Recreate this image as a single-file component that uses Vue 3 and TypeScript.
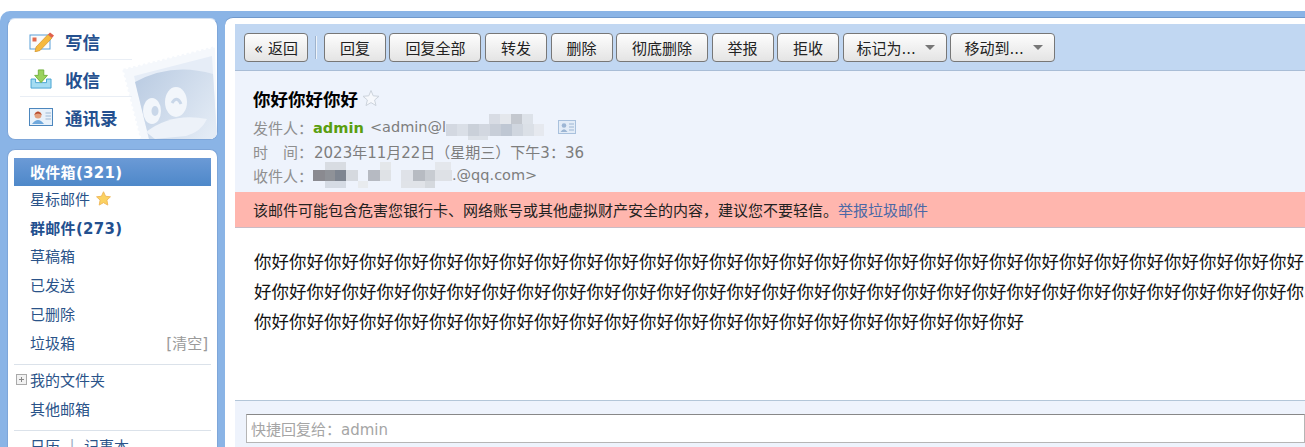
<template>
  <div class="page">
    <div class="top-gap"></div>
    <div class="frame">
      <aside class="side">
        <div class="quick">
          <svg class="penguin" viewBox="0 0 100 95" aria-hidden="true">
            <defs>
              <linearGradient id="head" x1="0" y1="0.2" x2="1" y2="0.8">
                <stop offset="0" stop-color="#bccde3" />
                <stop offset="1" stop-color="#e3ebf5" />
              </linearGradient>
            </defs>
            <path d="M5 25 L98 2 L100 95 H23 Z" fill="#f5f8fc" />
            <path d="M5 25 L98 2 M5 25 L23 95" stroke="#fff" stroke-width="3" stroke-linecap="round" stroke-dasharray="0 5" fill="none" />
            <path d="M17 32 L95 12 L100 95 H32 Z" fill="#e6edf7" />
            <path d="M18 38 Q55 18 96 30 L100 95 H32 Z" fill="url(#head)" />
            <ellipse cx="35" cy="67" rx="9" ry="13" fill="#f2f6fb" />
            <ellipse cx="59" cy="58" rx="11" ry="15" fill="#f2f6fb" />
            <ellipse cx="38" cy="67" rx="3.5" ry="5" fill="#c9d7e9" />
            <path d="M55 59 q5 -8 9 1" stroke="#c9d7e9" stroke-width="3" fill="none" />
            <path d="M29 88 Q55 68 90 75 Q84 88 69 92 L38 95 Z" fill="#edf2f9" />
          </svg>
          <a class="quick-item">
            <svg class="qi" viewBox="0 0 25 20" aria-hidden="true">
              <rect x="1" y="3" width="20" height="14" fill="#fbfbfb" stroke="#5a9fd8" />
              <rect x="3.5" y="5.5" width="4" height="4" fill="#e2694d" />
              <path d="M7 15 L19 2.5 L23 6 L11 18.5 L6 20 Z" fill="#f6b93f" stroke="#c98a20" stroke-width=".6" />
              <path d="M19 2.5 L21 .5 L25 3.5 L23 6 Z" fill="#e0604c" />
            </svg>
            <span>写信</span>
          </a>
          <a class="quick-item">
            <svg class="qi" viewBox="0 0 25 22" aria-hidden="true">
              <path d="M1 11 H6 V15 H18 V11 H23 V21 H1 Z" fill="#a5dcf2" stroke="#3f9fd0" />
              <path d="M9 1 H15 V7 H19 L12 15 L5 7 H9 Z" fill="#9ad25e" stroke="#6fb03a" />
            </svg>
            <span>收信</span>
          </a>
          <a class="quick-item">
            <svg class="qi" viewBox="0 0 25 20" aria-hidden="true">
              <rect x=".5" y="1.5" width="23" height="17" fill="#e8f1fa" stroke="#4c86bd" />
              <circle cx="9" cy="8" r="3.5" fill="#e3a07d" />
              <path d="M5 8 Q9 1 13 8 Q9 5 5 8Z" fill="#b5492e" />
              <path d="M3 17 Q9 9 15 17 Z" fill="#6fa8dc" />
              <path d="M16.5 6 H22 M16.5 9 H22 M16.5 12 H22" stroke="#9db8d3" />
            </svg>
            <span>通讯录</span>
          </a>
        </div>

        <div class="folders">
          <div class="folder active"><b>收件箱(321)</b></div>
          <div class="folder">
            星标邮件
            <svg class="star" viewBox="0 0 16 16" aria-hidden="true">
              <path d="M8 .8 10.2 5.6 15.4 6.2 11.6 9.7 12.6 15 8 12.4 3.4 15 4.4 9.7.6 6.2 5.8 5.6Z" fill="#fbd261" stroke="#efb85a" />
            </svg>
          </div>
          <div class="folder"><b>群邮件(273)</b></div>
          <div class="folder">草稿箱</div>
          <div class="folder">已发送</div>
          <div class="folder">已删除</div>
          <div class="folder spread">垃圾箱<span class="clear">[清空]</span></div>
          <div class="rule"></div>
          <div class="folder">
            <span class="plus"></span>我的文件夹
          </div>
          <div class="folder">其他邮箱</div>
          <div class="rule"></div>
          <div class="folder">日历<span class="pipe">|</span>记事本</div>
        </div>
      </aside>

      <main class="main">
        <div class="toolbar">
          <button class="btn back">« 返回</button>
          <span class="sep"></span>
          <button v-for="b in buttons" :key="b" class="btn">{{ b }}</button>
          <button v-for="m in menus" :key="m" class="btn menu">{{ m }}<i class="arrow"></i></button>
        </div>

        <div class="head">
          <div class="subject">
            你好你好你好
            <svg class="sub-star" viewBox="0 0 18 18" aria-hidden="true">
              <path d="M9 1.5 11.2 6.8 17 7.3 12.6 11 14 16.6 9 13.6 4 16.6 5.4 11 1 7.3 6.8 6.8Z" fill="#f6f8fc" stroke="#ccd3dc" />
            </svg>
          </div>
          <div class="meta">
            <span class="lbl">发件人：</span><b class="sender">admin</b>
            <span class="addr small gap">&lt;admin@l</span>
            <svg class="mosaic m1" viewBox="0 0 100 26" aria-hidden="true">
              <rect v-for="(r, i) in mosaicFrom" :key="i" :x="r[0]" :y="r[1]" :width="r[2]" :height="r[3]" :fill="r[4]" />
            </svg>
            <svg class="card" viewBox="0 0 18 14" aria-hidden="true">
              <rect x=".5" y=".5" width="17" height="13" fill="#e3ecf7" stroke="#a9c1dd" />
              <circle cx="6" cy="5.5" r="2.3" fill="#9db6d4" />
              <path d="M2.5 12 Q6 6.5 9.5 12Z" fill="#9db6d4" />
              <path d="M11 4 H16 M11 7 H16 M11 10 H16" stroke="#9db6d4" />
            </svg>
          </div>
          <div class="meta">
            <span class="lbl">时　间：</span><span class="addr time">2023年11月22日（星期三）下午3：36</span>
          </div>
          <div class="meta">
            <span class="lbl">收件人：</span>
            <svg class="mosaic m2" viewBox="0 0 139 26" aria-hidden="true">
              <rect v-for="(r, i) in mosaicTo" :key="i" :x="r[0]" :y="r[1]" :width="r[2]" :height="r[3]" :fill="r[4]" />
            </svg>
            <span class="addr small">.@qq.com&gt;</span>
          </div>
        </div>

        <div class="warn">
          该邮件可能包含危害您银行卡、网络账号或其他虚拟财产安全的内容，建议您不要轻信。<a>举报垃圾邮件</a>
        </div>

        <div class="body">
          <div v-for="(line, i) in lines" :key="i" class="line">{{ line }}</div>
        </div>

        <div class="reply">
          <div class="reply-box">快捷回复给：admin</div>
        </div>
      </main>
    </div>
  </div>
</template>

<script setup lang="ts">
type Block = [number, number, number, number, string]

const buttons: string[] = ['回复', '回复全部', '转发', '删除', '彻底删除', '举报', '拒收']
const menus: string[] = ['标记为...', '移动到...']

const lines: string[] = [
  '你好'.repeat(30),
  '好你'.repeat(30),
  '你好'.repeat(22),
]

// redacted address, drawn as the mosaic blocks of the screenshot
const mosaicFrom: Block[] = [
  [43, 0, 11, 10, '#d8dce4'],
  [54, 0, 11, 10, '#e4e7ec'],
  [65, 0, 11, 10, '#c4c8cf'],
  [76, 0, 11, 10, '#dde2e9'],
  [0, 10, 11, 12, '#d3d8e1'],
  [11, 10, 11, 12, '#dadfe7'],
  [22, 10, 11, 12, '#cad0d9'],
  [33, 10, 11, 12, '#d2d7e0'],
  [44, 10, 11, 12, '#c8ced8'],
  [55, 10, 11, 12, '#bfc7d3'],
  [66, 10, 11, 12, '#d0d6df'],
  [77, 10, 11, 12, '#dbe0e7'],
  [88, 10, 10, 12, '#e6e9ef'],
  [22, 22, 20, 4, '#dce1e8'],
]

const mosaicTo: Block[] = [
  [12, 0, 21, 8, '#d8dce2'],
  [67, 0, 11, 8, '#e4e7ea'],
  [122, 0, 16, 8, '#e4e7ec'],
  [0, 8, 12, 11, '#8a8a90'],
  [12, 8, 10, 11, '#8f9298'],
  [22, 8, 11, 11, '#7e8590'],
  [33, 8, 12, 11, '#d5d9df'],
  [55, 8, 12, 11, '#b6bac2'],
  [67, 8, 11, 11, '#dfe2e6'],
  [88, 8, 12, 11, '#dfe2e8'],
  [100, 8, 12, 11, '#b7bbc2'],
  [112, 8, 10, 11, '#c8ccd2'],
  [122, 8, 17, 11, '#dee1e6'],
  [12, 19, 21, 7, '#d5dbe4'],
  [45, 19, 10, 7, '#e8ebee'],
  [88, 19, 24, 7, '#e0e3e8'],
  [112, 19, 10, 7, '#d5d9de'],
]
</script>

<style>
html,
body {
  margin: 0;
  background: #fff;
  overflow: hidden;
}
</style>

<style scoped>
.page {
  width: 1305px;
  height: 447px;
  overflow: hidden;
  font-family: "DejaVu Sans", "Noto Sans CJK SC", sans-serif;
}

.top-gap {
  height: 11px;
}

.frame {
  display: flex;
  height: 436px;
  box-sizing: border-box;
  padding: 6px 0 0 7px;
  gap: 7px;
  background: #8ab4e6;
  border-top-left-radius: 10px;
}

.side {
  width: 211px;
  flex: none;
  margin-top: 1px;
  display: flex;
  flex-direction: column;
  gap: 9px;
}

.quick {
  position: relative;
  height: 122px;
  flex: none;
  box-sizing: border-box;
  padding: 3px 12px 0;
  background: #fff;
  border-radius: 8px;
  border: 1px solid #7ea6d9;
  border-top-color: #d5e2f3;
  overflow: hidden;
}

.penguin {
  position: absolute;
  right: 0;
  bottom: 0;
  width: 100px;
  height: 95px;
}

.quick-item {
  position: relative;
  display: flex;
  align-items: center;
  box-sizing: border-box;
  width: 112px;
  height: 37.5px;
  padding-top: 3px;
  color: #24508f;
  font-size: 17.5px;
  font-weight: 700;
  border-bottom: 1px solid #e9eef5;
}

.quick-item:last-of-type {
  border-bottom: 0;
}

.qi {
  width: 25px;
  height: 20px;
  margin: 0 11px 0 9px;
  flex: none;
}

.folders {
  flex: 1;
  min-height: 0;
  box-sizing: border-box;
  padding: 8px 6px 0;
  background: #fff;
  border: 1px solid #7ea6d9;
  border-bottom: 0;
  border-radius: 8px 8px 0 0;
  overflow: hidden;
}

.folder {
  display: flex;
  align-items: center;
  box-sizing: border-box;
  height: 28.8px;
  padding: 0 0 4px 16px;
  color: #2a5389;
  font-size: 15px;
  white-space: nowrap;
}

.folder b {
  color: #23508f;
  letter-spacing: .3px;
}

.folder.active {
  height: 28px;
  padding-bottom: 2px;
  background: linear-gradient(#6b9ad6, #4e88c9);
}

.folder.active b {
  color: #fff;
}

.spread {
  justify-content: space-between;
  padding-right: 3px;
}

.clear {
  color: #9a9a9a;
}

.star {
  width: 15px;
  height: 15px;
  margin-left: 6px;
}

.rule {
  height: 1px;
  margin: 5.5px 0 2px;
  background: #dbe2ea;
}

.plus {
  width: 9px;
  height: 9px;
  margin: 0 3px 0 -14px;
  border: 1px solid #aaa;
  flex: none;
  background:
    linear-gradient(#888, #888) center / 5px 1px no-repeat,
    linear-gradient(#888, #888) center / 1px 5px no-repeat,
    #f2f2f2;
}

.pipe {
  margin: 0 9.5px;
  color: #9fb0c4;
}

.main {
  flex: 1;
  min-width: 0;
  box-sizing: border-box;
  display: flex;
  flex-direction: column;
  padding: 6px 0 0 10px;
  background: #fff;
  border-top: 1px solid #7099cc;
  border-top-left-radius: 8px;
}

.toolbar {
  display: flex;
  align-items: center;
  gap: 3.5px;
  height: 47px;
  flex: none;
  box-sizing: border-box;
  padding: 0 9px;
  background: #c1d7f2;
  border-bottom: 1px solid #a9bdd6;
}

.btn {
  height: 29px;
  padding: 0 15px;
  flex: none;
  font: 15px "DejaVu Sans", "Noto Sans CJK SC", sans-serif;
  color: #222;
  background: linear-gradient(#fdfdfd, #e4e4e4);
  border: 1px solid #777;
  border-radius: 4px;
}

.back {
  padding: 0 9px;
}

.sep {
  width: 1px;
  height: 23px;
  margin: 0 3.5px;
  background: #eef3f9;
  border-left: 1px solid #9fb3cc;
}

.menu {
  display: flex;
  align-items: center;
  padding: 0 11px 0 13px;
}

.arrow {
  margin-left: 9px;
  border-style: solid;
  border-width: 5px 5px 0;
  border-color: #777 transparent transparent;
}

.head {
  height: 121px;
  flex: none;
  box-sizing: border-box;
  padding: 14px 18px 0;
  background: #eef3fc;
}

.subject {
  display: flex;
  align-items: center;
  height: 26px;
  margin-bottom: 4px;
  font-size: 17.5px;
  font-weight: 700;
  color: #000;
}

.sub-star {
  width: 18px;
  height: 18px;
  margin-left: 4px;
}

.meta {
  display: flex;
  align-items: center;
  height: 24px;
  font-size: 15px;
  color: #888;
  white-space: nowrap;
}

.lbl {
  color: #8f8f8f;
  width: 60px;
  flex: none;
}

.sender {
  color: #5a9e0f;
  font-size: 14.6px;
}

.addr {
  color: #7d7d7d;
}

.small {
  font-size: 14.5px;
}

.time {
  margin-left: 1px;
}

.gap {
  margin-left: 6px;
}

.mosaic {
  display: block;
  flex: none;
  filter: blur(.6px);
}

.m1 {
  width: 100px;
  height: 26px;
}

.m2 {
  width: 139px;
  height: 26px;
}

.card {
  width: 18px;
  height: 14px;
  margin-left: 12px;
}

.warn {
  height: 36px;
  flex: none;
  box-sizing: border-box;
  display: flex;
  align-items: center;
  padding-left: 18px;
  font-size: 15px;
  color: #222;
  background: #ffb6ae;
  border-bottom: 1px solid #c9bcc6;
  white-space: nowrap;
}

.warn a {
  color: #4a68a6;
}

.body {
  flex: 1;
  min-height: 0;
  padding: 19px 0 0 19px;
  overflow: hidden;
  font-size: 17.5px;
  line-height: 30px;
  color: #111;
}

.line {
  white-space: nowrap;
}

.reply {
  height: 47px;
  flex: none;
  box-sizing: border-box;
  padding: 13px 0 0 11px;
  background: #eef3fc;
  border-top: 1px solid #b3c6d8;
}

.reply-box {
  height: 29px;
  box-sizing: border-box;
  padding: 3px 4px;
  background: #fff;
  border: 1px solid #b5b5b5;
  border-top-color: #888;
  font-size: 15px;
  color: #a5a5a5;
}
</style>
